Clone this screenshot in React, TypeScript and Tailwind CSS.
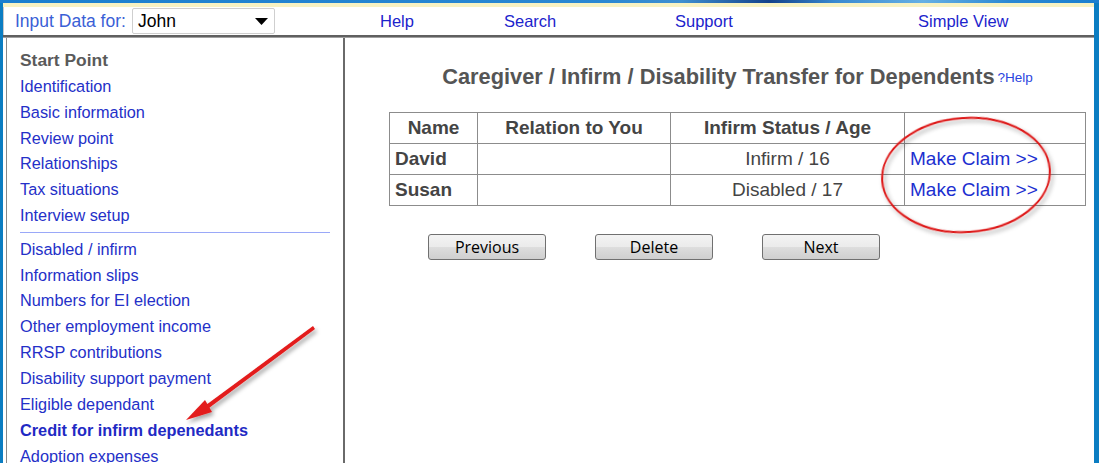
import React from "react";

const F = { fontFamily: '"Liberation Sans", Arial, sans-serif' };

const group1 = [
  "Identification",
  "Basic information",
  "Review point",
  "Relationships",
  "Tax situations",
  "Interview setup",
];
const group2 = [
  "Disabled / infirm",
  "Information slips",
  "Numbers for EI election",
  "Other employment income",
  "RRSP contributions",
  "Disability support payment",
  "Eligible dependant",
];

function Btn({ label }: { label: string }) {
  return (
    <button
      className="w-[118px] h-[26px] rounded-[3px] border border-[#707070] bg-[linear-gradient(to_bottom,#f3f3f3_0%,#ebebeb_50%,#dddddd_51%,#cfcfcf_100%)] text-[16px] leading-[24px] text-black"
      style={{ fontFamily: '"Open Sans", "Liberation Sans", sans-serif' }}
    >
      {label}
    </button>
  );
}

export default function App() {
  return (
    <div
      className="relative w-[1099px] h-[463px] overflow-hidden bg-[#0b7dc2] flex flex-col"
      style={F}
    >
      {/* top blue strip */}
      <div className="h-[3px] shrink-0 bg-[linear-gradient(to_right,#1b7fcf_0%,#2b88d2_55%,#3f8fd0_62%,#14428a_70%,#3a8ad0_76%,#66b0e4_84%,#2b88d2_92%,#1b7fcf_100%)]" />
      <div className="flex-1 flex flex-col ml-[3px] mr-[5px] mb-[3px] bg-white">
        {/* yellow strip */}
        <div className="h-[4px] shrink-0 bg-[#f8f2c2]" />
        {/* header */}
        <div className="h-[28px] shrink-0 flex items-center border-l border-[#c8c8c8]">
          <span className="ml-[11px] w-[117px] text-[17.5px] text-[#3a60d6] whitespace-nowrap">
            Input Data for:
          </span>
          <div className="w-[143px] h-[26px] border border-[#cfcfcf] rounded-[2px] flex items-center justify-between pl-[5px] pr-[6px] bg-white">
            <span className="text-[17.5px] text-black">John</span>
            <svg width="13" height="7" viewBox="0 0 13 7">
              <polygon points="0,0 13,0 6.5,7" fill="#000" />
            </svg>
          </div>
          <div className="ml-[105px] flex text-[16.5px] text-[#1c23cc]">
            <span className="w-[124px]">Help</span>
            <span className="w-[171px]">Search</span>
            <span className="w-[243px]">Support</span>
            <span>Simple View</span>
          </div>
        </div>
        <div className="h-[2px] shrink-0 bg-[#606060]" />
        <div className="h-[1px] shrink-0 bg-[#a0a0a0]" />
        {/* body */}
        <div className="flex-1 flex min-h-0">
          {/* sidebar */}
          <div className="ml-[3px] w-[339px] shrink-0 border-l border-[#8a8a8a] border-r-2 border-r-[#6a6a6a] pl-[13px] pt-[9px] overflow-hidden">
            <div className="text-[17.4px] leading-[27px] font-bold text-[#5a5a5a]">
              Start Point
            </div>
            {group1.map((t) => (
              <div key={t} className="text-[16.3px] leading-[25.8px] text-[#2430c8] whitespace-nowrap">
                {t}
              </div>
            ))}
            <div className="mt-[3px] mb-[4px] w-[310px] h-[1px] bg-[#9aa8f8]" />
            {group2.map((t) => (
              <div key={t} className="text-[16.3px] leading-[25.85px] text-[#2430c8] whitespace-nowrap">
                {t}
              </div>
            ))}
            <div className="text-[16.3px] leading-[25.85px] font-bold text-[#1f2ac4] whitespace-nowrap">
              Credit for infirm depenedants
            </div>
            <div className="text-[16.3px] leading-[25.85px] text-[#2430c8] whitespace-nowrap">
              Adoption expenses
            </div>
          </div>
          {/* main */}
          <div className="flex-1 pt-[27px]">
            <div className="ml-[44px] w-[697px]">
              <div className="flex justify-center items-start">
                <span className="text-[21.8px] leading-[24px] font-bold text-[#555555] whitespace-nowrap">
                  Caregiver / Infirm / Disability Transfer for Dependents
                </span>
                <span className="ml-[3px] mt-[6px] text-[13.5px] leading-[14px] text-[#2a44e0]">
                  ?Help
                </span>
              </div>
              <table className="mt-[23px] w-[697px] border-collapse border border-[#8c8c8c] text-[19px]">
                <thead>
                  <tr className="h-[31px]">
                    <th className="w-[88px] border border-[#8c8c8c] font-bold text-[#444] text-center">Name</th>
                    <th className="w-[193px] border border-[#8c8c8c] font-bold text-[#444] text-center">Relation to You</th>
                    <th className="w-[234px] border border-[#8c8c8c] font-bold text-[#444] text-center">Infirm Status / Age</th>
                    <th className="border border-[#8c8c8c]"></th>
                  </tr>
                </thead>
                <tbody>
                  {[
                    ["David", "Infirm / 16"],
                    ["Susan", "Disabled / 17"],
                  ].map(([n, s]) => (
                    <tr key={n} className="h-[31px]">
                      <td className="border border-[#8c8c8c] pl-[5px] font-bold text-[#444]">{n}</td>
                      <td className="border border-[#8c8c8c]"></td>
                      <td className="border border-[#8c8c8c] text-center text-[#444]">{s}</td>
                      <td className="border border-[#8c8c8c] pl-[5px] text-[#1c2fd0] whitespace-nowrap">
                        Make Claim &gt;&gt;
                      </td>
                    </tr>
                  ))}
                </tbody>
              </table>
            </div>
            <div className="mt-[28px] ml-[83px] flex gap-[49px]">
              <Btn label="Previous" />
              <Btn label="Delete" />
              <Btn label="Next" />
            </div>
          </div>
        </div>
      </div>

      {/* red ellipse annotation */}
      <svg
        className="absolute left-[872px] top-[108px] pointer-events-none"
        width="195"
        height="140"
        viewBox="0 0 195 140"
      >
        <defs>
          <filter id="sh" x="-20%" y="-20%" width="140%" height="140%">
            <feDropShadow dx="2" dy="3" stdDeviation="2" floodColor="#000" floodOpacity="0.35" />
          </filter>
        </defs>
        <ellipse
          cx="94"
          cy="67"
          rx="84"
          ry="57"
          transform="rotate(-4 94 67)"
          fill="none"
          stroke="#dd1414"
          strokeWidth="2"
          filter="url(#sh)"
        />
      </svg>

      {/* red arrow annotation */}
      <svg
        className="absolute left-[175px] top-[318px] pointer-events-none"
        width="150"
        height="115"
        viewBox="0 0 150 115"
      >
        <defs>
          <filter id="sh2" x="-20%" y="-20%" width="140%" height="140%">
            <feDropShadow dx="2" dy="3" stdDeviation="2" floodColor="#000" floodOpacity="0.35" />
          </filter>
        </defs>
        <g filter="url(#sh2)">
          <polygon points="138,8 140,11 34,90 31,87" fill="#e31b1b" />
          <polygon points="11,102 30,82 37,94" fill="#e31b1b" />
        </g>
      </svg>
    </div>
  );
}
